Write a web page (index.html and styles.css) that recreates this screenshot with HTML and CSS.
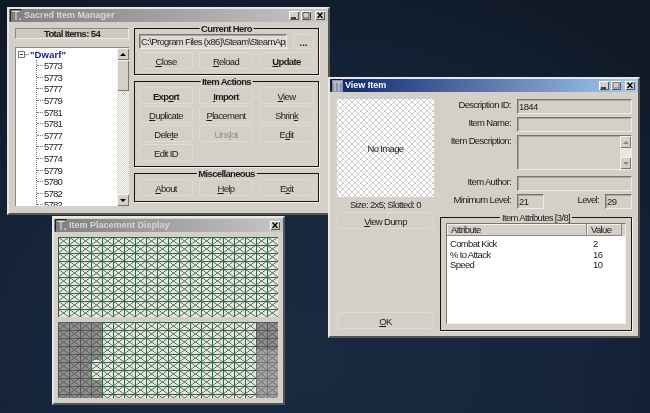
FILE: index.html
```html
<!DOCTYPE html>
<html lang="en">
<head>
  <meta charset="UTF-8">
  <title>Sacred Item Manager</title>
  <link rel="stylesheet" href="styles.css">
</head>
<body>

<!-- main window -->
<div class="janela janela_manager">
  <div class="titulo">
    <svg class="icone" viewBox="0 0 12 13"><path d="M0.5 12.5V0.5H11.5" fill="none" stroke="#222"/><path d="M2.5 2.5H9.5M6 2.5V11" fill="none" stroke="#e4e4e4"/><path d="M9.5 9.5h1.5v1.5H9.5z" fill="#e4e4e4"/></svg>
    <span class="titulo_texto">Sacred Item Manager</span>
    <div class="controles">
      <span class="ctrl"><svg viewBox="0 0 10 9"><path d="M2 7h5" stroke="#000" stroke-width="1.4"/></svg></span>
      <span class="ctrl"><svg viewBox="0 0 10 9"><path d="M2 1.5h6v5.5H2z" fill="none" stroke="#555"/></svg></span>
      <span class="ctrl ctrl_fechar"><svg viewBox="0 0 10 9"><path d="M2.5 1.5l5 5.5M7.5 1.5l-5 5.5" stroke="#000" stroke-width="1.3"/></svg></span>
    </div>
  </div>
  <div class="manager_corpo">
    <div class="manager_esq">
      <div class="total">Total Items: 54</div>
      <div class="arvore">
        <div class="arvore_lista">
          <div class="raiz"><span class="expandir"></span><span class="raiz_traco"></span><b>"Dwarf"</b></div>
          <ul class="itens">
            <li>5773</li>
            <li>5773</li>
            <li>5777</li>
            <li>5779</li>
            <li>5781</li>
            <li>5781</li>
            <li>5777</li>
            <li>5777</li>
            <li>5774</li>
            <li>5779</li>
            <li>5780</li>
            <li>5782</li>
            <li>5782</li>
          </ul>
        </div>
        <div class="rolagem">
          <span class="rolagem_btn"><i class="seta_cima"></i></span>
          <span class="rolagem_btn rolagem_polegar"></span>
          <span class="rolagem_trilha"></span>
          <span class="rolagem_btn"><i class="seta_baixo"></i></span>
        </div>
      </div>
    </div>
    <div class="manager_dir">
      <div class="grupo">
        <div class="grupo_nome">Current Hero</div>
        <div class="caminho_linha">
          <div class="campo caminho">C:\Program Files (x86)\Steam\SteamApps\</div>
          <button class="btn btn_pontos">...</button>
        </div>
        <div class="botoes">
          <button class="btn"><u>C</u>lose</button>
          <button class="btn"><u>R</u>eload</button>
          <button class="btn btn_forte"><u>U</u>pdate</button>
        </div>
      </div>
      <div class="grupo">
        <div class="grupo_nome">Item Actions</div>
        <div class="botoes">
          <button class="btn btn_forte">Exp<u>o</u>rt</button>
          <button class="btn btn_forte"><u>I</u>mport</button>
          <button class="btn"><u>V</u>iew</button>
          <button class="btn"><u>D</u>uplicate</button>
          <button class="btn"><u>P</u>lacement</button>
          <button class="btn">Shrin<u>k</u></button>
          <button class="btn">Dele<u>t</u>e</button>
          <button class="btn btn_off">Uns<u>l</u>ot</button>
          <button class="btn">E<u>d</u>it</button>
          <button class="btn">Edit ID</button>
        </div>
      </div>
      <div class="grupo">
        <div class="grupo_nome">Miscellaneous</div>
        <div class="botoes">
          <button class="btn"><u>A</u>bout</button>
          <button class="btn"><u>H</u>elp</button>
          <button class="btn">E<u>x</u>it</button>
        </div>
      </div>
    </div>
  </div>
</div>

<!-- placement window -->
<div class="janela janela_placement">
  <div class="titulo">
    <svg class="icone" viewBox="0 0 12 13"><path d="M0.5 12.5V0.5H11.5" fill="none" stroke="#222"/><path d="M2.5 2.5H9.5M6 2.5V11" fill="none" stroke="#e4e4e4"/><path d="M9.5 9.5h1.5v1.5H9.5z" fill="#e4e4e4"/></svg>
    <span class="titulo_texto">Item Placement Display</span>
    <div class="controles">
      <span class="ctrl ctrl_fechar"><svg viewBox="0 0 10 9"><path d="M2.5 1.5l5 5.5M7.5 1.5l-5 5.5" stroke="#000" stroke-width="1.3"/></svg></span>
    </div>
  </div>
  <div class="placement_corpo">
    <div class="grade grade_cima"></div>
    <div class="grade grade_baixo">
      <div class="ocupado_esq">
        <div class="ocupado ocupado_a"></div>
        <div class="ocupado ocupado_b"></div>
        <div class="ocupado ocupado_c"></div>
      </div>
      <div class="ocupado_dir">
        <div class="ocupado ocupado_d"></div>
        <div class="ocupado_claro"></div>
      </div>
    </div>
  </div>
</div>

<!-- view item window -->
<div class="janela janela_view">
  <div class="titulo titulo_ativo">
    <svg class="icone" viewBox="0 0 12 13"><path d="M0 0h12v13H0z" fill="#8a94a4"/><path d="M0.5 12.5V0.5H11.5" fill="none" stroke="#111"/><path d="M2 3H11M4 3V12M8 3V12" fill="none" stroke="#d8dce4"/></svg>
    <span class="titulo_texto">View Item</span>
    <div class="controles">
      <span class="ctrl"><svg viewBox="0 0 10 9"><path d="M2 7h5" stroke="#000" stroke-width="1.4"/></svg></span>
      <span class="ctrl"><svg viewBox="0 0 10 9"><path d="M2 1.5h6v5.5H2z" fill="none" stroke="#777"/></svg></span>
      <span class="ctrl ctrl_fechar"><svg viewBox="0 0 10 9"><path d="M2.5 1.5l5 5.5M7.5 1.5l-5 5.5" stroke="#000" stroke-width="1.3"/></svg></span>
    </div>
  </div>
  <div class="view_corpo">
    <div class="view_esq">
      <div class="imagem">No Image</div>
      <div class="tamanho">Size: 2x5; Slotted: 0</div>
      <button class="btn btn_dump"><u>V</u>iew Dump</button>
      <button class="btn btn_ok"><u>O</u>K</button>
    </div>
    <div class="view_dir">
      <div class="form">
        <label>Description ID:</label>
        <div class="campo">1844</div>
        <label>Item Name:</label>
        <div class="campo"></div>
        <label>Item Description:</label>
        <div class="campo campo_desc">
          <div class="rolagem rolagem_off">
            <span class="rolagem_btn"><i class="seta_cima"></i></span>
            <span class="rolagem_trilha"></span>
            <span class="rolagem_btn"><i class="seta_baixo"></i></span>
          </div>
        </div>
        <label class="form_autor">Item Author:</label>
        <div class="campo form_autor"></div>
        <label>Minimum Level:</label>
        <div class="niveis">
          <div class="campo campo_nivel">21</div>
          <div class="nivel_dir">
            <label>Level:</label>
            <div class="campo campo_nivel">29</div>
          </div>
        </div>
      </div>
      <div class="grupo grupo_attr">
        <div class="grupo_nome grupo_nome_leve">Item Attributes [3/8]</div>
        <div class="tabela">
          <div class="tabela_cab">
            <span class="col_attr">Attribute</span>
            <span class="col_valor">Value</span>
          </div>
          <div class="tabela_linha"><span class="cel_attr">Combat Kick</span><span>2</span></div>
          <div class="tabela_linha"><span class="cel_attr">% to Attack</span><span>16</span></div>
          <div class="tabela_linha"><span class="cel_attr">Speed</span><span>10</span></div>
        </div>
      </div>
    </div>
  </div>
</div>

</body>
</html>
```

FILE: styles.css
```css
* {
  box-sizing: border-box;
  margin: 0;
  padding: 0;
}

body {
  width: 650px;
  height: 413px;
  overflow: hidden;
  position: relative;
  background: radial-gradient(ellipse 520px 420px at 45% 85%, #1a2b41, #15243a 60%, #0f1825 100%);
  font-family: "Liberation Sans", Arial, sans-serif;
  font-size: 9.5px;
  letter-spacing: -0.65px;
  line-height: 11px;
  color: #1c1c1c;
}

.janela {
  position: absolute;
  background: #d4d0c8;
  border: 2px solid;
  border-color: #e9e7e1 #55544f #55544f #e9e7e1;
}

.janela_manager {
  left: 7px;
  top: 7px;
  width: 323px;
  height: 208px;
}

.janela_placement {
  left: 52px;
  top: 216px;
  width: 233px;
  height: 189px;
  padding-top: 1px;
}

.janela_view {
  left: 328px;
  top: 77px;
  width: 312px;
  height: 261px;
}

/* title bar */
.titulo {
  height: 13px;
  display: flex;
  align-items: center;
  padding: 0 3px 0 1px;
  background: linear-gradient(90deg, #7f7f7f, #c6c6c6);
  color: #d8d6d0;
  font-size: 9px;
  letter-spacing: 0;
  font-weight: bold;
}

.titulo_ativo {
  background: linear-gradient(90deg, #0a246a, #a6caf0);
  color: #fff;
}

.icone {
  width: 12px;
  height: 13px;
  margin-right: 2px;
  flex: none;
}

.controles {
  margin-left: auto;
  display: flex;
  gap: 2px;
}

.ctrl {
  width: 10px;
  height: 9px;
  display: block;
  background: #d4d0c8;
  box-shadow: inset 1px 1px 0 #fff, inset -1px -1px 0 #555;
}

.ctrl svg {
  display: block;
  width: 10px;
  height: 9px;
}

.ctrl_fechar {
  margin-left: 2px;
}

/* manager */
.manager_corpo {
  display: grid;
  grid-template-columns: 114px 185px;
  column-gap: 5px;
  padding: 6px 0 0 6px;
}

.manager_esq {
  display: flex;
  flex-direction: column;
  gap: 8px;
}

.manager_dir {
  display: flex;
  flex-direction: column;
  gap: 6px;
}

.total {
  height: 11px;
  text-align: center;
  font-weight: bold;
  background: #cdc9c0;
  border: 1px solid;
  border-color: #8b8983 #eeece6 #eeece6 #8b8983;
  line-height: 9px;
}

.arvore {
  height: 159px;
  display: flex;
  background: #fff;
  border-top: 1px solid #8b8983;
  border-left: 1px solid #8b8983;
  overflow: hidden;
}

.arvore_lista {
  flex: 1;
  overflow: hidden;
}

.raiz {
  height: 12px;
  display: flex;
  align-items: center;
  padding-left: 2px;
}

.raiz b {
  color: #14149a;
  letter-spacing: 0.1px;
  margin-left: 1px;
}

.expandir {
  width: 7px;
  height: 7px;
  border: 1px solid #777;
  background: linear-gradient(#333, #333) center / 3px 1px no-repeat;
}

.raiz_traco {
  width: 4px;
  border-top: 1px dotted #777;
}

.itens {
  list-style: none;
  margin-left: 20px;
  border-left: 1px dotted #777;
}

.itens li {
  height: 11.6px;
  display: flex;
  align-items: center;
  gap: 1px;
  letter-spacing: -0.8px;
}

.itens li::before {
  content: "";
  width: 6px;
  border-top: 1px dotted #777;
}

/* scrollbar */
.rolagem {
  width: 12px;
  flex: none;
  display: flex;
  flex-direction: column;
  align-items: stretch;
}

.rolagem_btn {
  height: 12px;
  flex: none;
  display: flex;
  align-items: center;
  justify-content: center;
  background: #d4d0c8;
  box-shadow: inset 1px 1px 0 #f4f2ec, inset -1px -1px 0 #77756f;
}

.rolagem_polegar {
  height: 31px;
}

.rolagem_trilha {
  flex: 1;
  background: conic-gradient(#d4d0c8 25%, #fff 0 50%, #d4d0c8 0 75%, #fff 0) 0 0 / 2px 2px;
}

.seta_cima,
.seta_baixo {
  width: 0;
  height: 0;
  border-left: 3px solid transparent;
  border-right: 3px solid transparent;
}

.seta_cima {
  border-bottom: 3px solid #000;
}

.seta_baixo {
  border-top: 3px solid #000;
}

/* group box */
.grupo {
  position: relative;
  border: 1px solid #141414;
  box-shadow: 1px 1px 0 #f2f0ea;
  padding: 5px 4px;
}

.grupo_nome {
  position: absolute;
  top: -6px;
  left: 50%;
  transform: translateX(-50%);
  padding: 0 2px;
  background: #d4d0c8;
  font-weight: bold;
  white-space: nowrap;
}

.grupo_nome_leve {
  font-weight: normal;
}

.caminho_linha {
  display: flex;
  justify-content: space-between;
  margin-bottom: 3px;
}

.campo {
  height: 15px;
  border: 1px solid;
  border-color: #77756f #efede7 #efede7 #77756f;
  box-shadow: inset 1px 1px 0 #a8a69f;
  padding: 1px 0 0 1px;
  background: #d4d0c8;
  overflow: hidden;
  white-space: nowrap;
}

.caminho {
  width: 148px;
  background: #dedbd4;
}

.botoes {
  display: grid;
  grid-template-columns: 54px 54px 55px;
  grid-auto-rows: 17px;
  justify-content: space-between;
  row-gap: 2px;
}

.btn {
  font: inherit;
  letter-spacing: inherit;
  color: inherit;
  background: #d4d0c8;
  border: 1px solid #dedbd4;
  border-radius: 3px;
  padding: 1px 0 0;
}

.btn_pontos {
  width: 21px;
  height: 15px;
  font-weight: bold;
  letter-spacing: 0;
}

.btn_forte {
  font-weight: bold;
}

.btn_off {
  color: #8f8d87;
}

/* placement */
.placement_corpo {
  display: flex;
  flex-direction: column;
  gap: 5px;
  padding: 5px 0 0 4px;
}

.grade {
  width: 220px;
  background-color: #e4e8e3;
  background-image:
    linear-gradient(#2a6a36 0 1.2px, transparent 1.2px),
    linear-gradient(90deg, #2a6a36 0 1.2px, transparent 1.2px),
    linear-gradient(to top right, transparent calc(50% - 0.7px), #555c55 50%, transparent calc(50% + 0.7px)),
    linear-gradient(to bottom right, transparent calc(50% - 0.7px), #555c55 50%, transparent calc(50% + 0.7px));
  background-size: 11px 8px;
}

.grade_cima {
  height: 80px;
}

.grade_baixo {
  height: 76px;
  display: flex;
  justify-content: space-between;
}

.ocupado_esq {
  width: 44px;
  display: flex;
  flex-direction: column;
}

.ocupado_dir {
  width: 22px;
  display: flex;
  flex-direction: column;
}

.ocupado {
  backdrop-filter: grayscale(1) contrast(0.5) brightness(0.8);
}

.ocupado_a {
  height: 38px;
}

.ocupado_b {
  height: 20px;
  width: 33px;
}

.ocupado_c {
  height: 18px;
}

.ocupado_d {
  height: 28px;
}

.ocupado_claro {
  flex: 1;
  backdrop-filter: grayscale(1) contrast(0.35) brightness(1);
}

/* view item */
.view_corpo {
  display: grid;
  grid-template-columns: 97px 192px;
  column-gap: 6px;
  padding: 7px 0 0 7px;
  height: 244px;
}

.view_esq {
  display: flex;
  flex-direction: column;
  padding-bottom: 7px;
}

.imagem {
  height: 98px;
  display: flex;
  align-items: center;
  justify-content: center;
  background-color: #fff;
  background-image:
    linear-gradient(to top right, transparent calc(50% - 0.5px), #cfcfcf 50%, transparent calc(50% + 0.5px)),
    linear-gradient(to bottom right, transparent calc(50% - 0.5px), #cfcfcf 50%, transparent calc(50% + 0.5px));
  background-size: 6px 6px;
}

.tamanho {
  height: 15px;
  padding-top: 2px;
  text-align: center;
}

.btn_dump {
  height: 17px;
}

.btn_ok {
  height: 17px;
  margin-top: auto;
}

.form {
  display: grid;
  grid-template-columns: 71px 115px;
  grid-auto-rows: min-content;
  column-gap: 6px;
  row-gap: 3px;
  margin-bottom: 8px;
}

.form label {
  text-align: right;
  white-space: nowrap;
}

.form_autor {
  margin-top: 3px;
}

.campo_desc {
  height: 35px;
  padding: 0;
  display: flex;
  justify-content: flex-end;
}

.rolagem_off {
  width: 11px;
}

.rolagem_off .rolagem_trilha {
  background: #e8e6e0;
}

.rolagem_off .seta_cima {
  border-bottom-color: #8a8882;
}

.rolagem_off .seta_baixo {
  border-top-color: #8a8882;
}

.niveis {
  display: flex;
  justify-content: space-between;
}

.campo_nivel {
  width: 27px;
}

.nivel_dir {
  display: flex;
  gap: 6px;
}

.grupo_attr {
  height: 114px;
  padding: 5px;
  margin-right: 6px;
  width: 192px;
}

.tabela {
  height: 101px;
  background: #fff;
  border: 1px solid;
  border-color: #77756f #efede7 #efede7 #77756f;
}

.tabela_cab {
  height: 12px;
  display: flex;
  background: #d4d0c8;
  margin-bottom: 2px;
}

.tabela_cab span {
  padding-left: 4px;
  box-shadow: inset -1px -1px 0 #8b8983, inset 1px 1px 0 #f4f2ec;
}

.col_attr {
  width: 140px;
}

.col_valor {
  width: 35px;
}

.tabela_linha {
  height: 10.5px;
  display: flex;
  padding-left: 3px;
}

.cel_attr {
  width: 143px;
}
```
